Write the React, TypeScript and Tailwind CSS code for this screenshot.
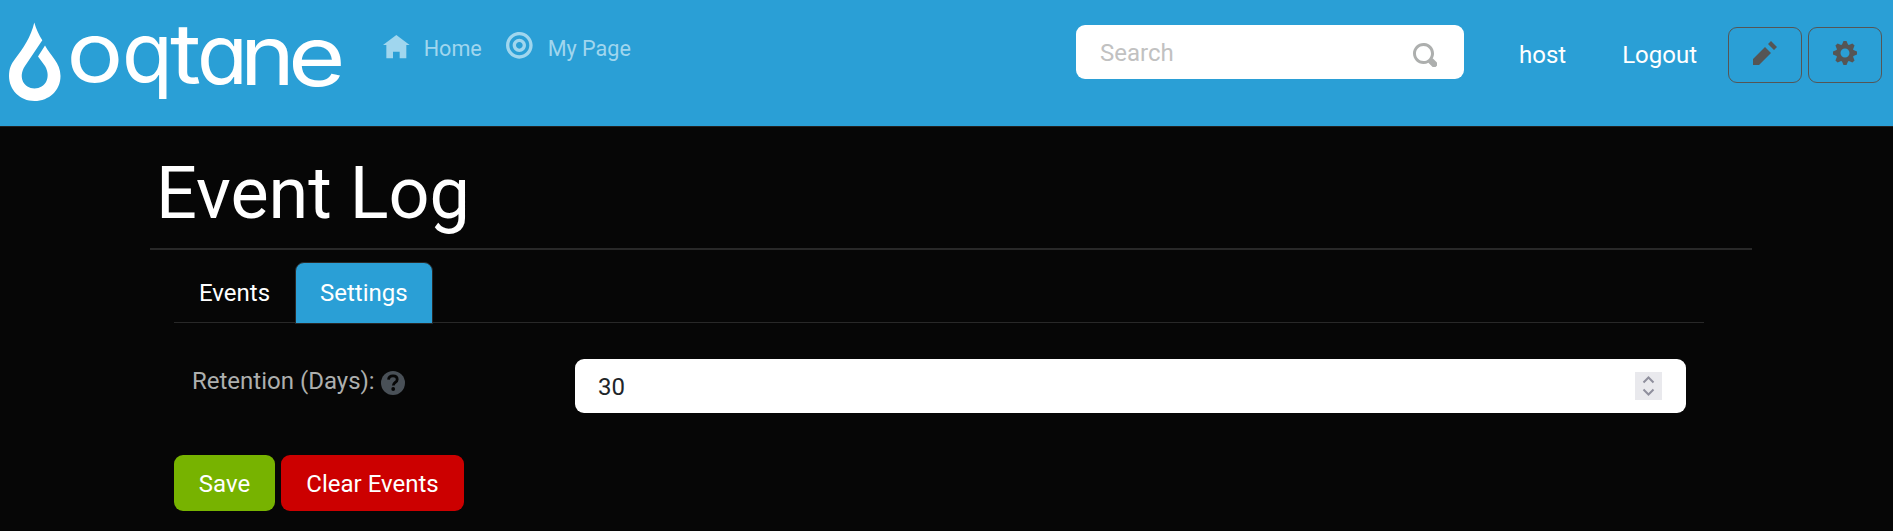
import React from "react";

const icons = {
  home: "M4 0l-4 3h1v4h2v-2h2v2h2v-4.03l1 .03-4-3z",
  target:
    "M4 0c-2.2 0-4 1.8-4 4s1.8 4 4 4 4-1.8 4-4-1.8-4-4-4zm0 1c1.66 0 3 1.34 3 3s-1.34 3-3 3-3-1.34-3-3 1.34-3 3-3zm0 1c-1.1 0-2 .9-2 2s.9 2 2 2 2-.9 2-2-.9-2-2-2zm0 1c.56 0 1 .44 1 1s-.44 1-1 1-1-.44-1-1 .44-1 1-1z",
  search:
    "M3.5 0c-1.93 0-3.5 1.57-3.5 3.5s1.57 3.5 3.5 3.5c.59 0 1.17-.14 1.66-.41a1 1 0 0 0 .13.13l1 1a1.02 1.02 0 1 0 1.44-1.44l-1-1a1 1 0 0 0-.16-.13c.27-.49.44-1.06.44-1.66 0-1.93-1.55-3.5-3.5-3.5zm0 1c1.39 0 2.5 1.11 2.5 2.5 0 .66-.24 1.27-.66 1.72-.01.01-.02.02-.03.03a1 1 0 0 0-.13.13c-.44.4-1.04.63-1.69.63-1.39 0-2.5-1.11-2.5-2.5s1.11-2.5 2.5-2.5z",
  pencil: "M6 0l-1 1 2 2 1-1-2-2zm-2 2l-4 4v2h2l4-4-2-2z",
  cog: "M3.5 0l-.5 1.19c-.1.03-.19.08-.28.13l-1.19-.5-.72.72.5 1.19c-.05.1-.09.18-.13.28l-1.19.5v1l1.19.5c.04.1.08.18.13.28l-.5 1.19.72.72 1.19-.5c.09.04.18.09.28.13l.5 1.19h1l.5-1.19c.09-.04.19-.08.28-.13l1.19.5.72-.72-.5-1.19c.04-.09.09-.19.13-.28l1.19-.5v-1l-1.19-.5c-.03-.09-.08-.19-.13-.28l.5-1.19-.72-.72-1.19.5c-.09-.04-.19-.09-.28-.13l-.5-1.19h-1zm.5 2.5c.83 0 1.5.67 1.5 1.5s-.67 1.5-1.5 1.5-1.5-.67-1.5-1.5.67-1.5 1.5-1.5z",
};

function Icon({ name, className }: { name: keyof typeof icons; className: string }) {
  return (
    <svg viewBox="0 0 8 8" fill="currentColor" className={`shrink-0 ${className}`} aria-hidden="true">
      <path d={icons[name]} />
    </svg>
  );
}

const wordmark = [
  { char: "o", x: 66.5, y: 81.5, stretch: 1.14 },
  { char: "q", x: 122, y: 81.5, stretch: 1 },
  { char: "t", x: 170, y: 83, stretch: 1.15 },
  { char: "a", x: 197, y: 83.5, stretch: 1 },
  { char: "n", x: 240, y: 84.5, stretch: 1.12 },
  { char: "e", x: 288, y: 85.5, stretch: 1.19 },
];

function Logo() {
  return (
    <svg viewBox="0 0 350 126" className="h-[126px] w-[350px] shrink-0" fill="#fff">
      <path d="M34.3 22.5C36 29 39 35 42.3 40.3L25 66C17.5 77 24 88.5 34.5 88.5C45.500 88.500 51.500 77 45 66L38 56.500L45 45.500C50.500 56 60.500 62.500 60.500 76C60.500 90.500 49 101 34.500 101C20 101 9 90 9 76C9 69 11 64 15 59C23 48.500 31 37 34.300 22.500Z" />
      <g className="font-['Inter',sans-serif] text-[83px] [font-feature-settings:'cv11']">
        {wordmark.map(({ char, x, y, stretch }) => (
          <text key={char} transform={`translate(${x} ${y}) scale(${stretch} 1)`}>
            {char}
          </text>
        ))}
      </g>
    </svg>
  );
}

export default function App() {
  return (
    <div className="h-[531px] overflow-hidden bg-[#060606] font-['Roboto',sans-serif] text-2xl leading-9 text-white">
      <header className="flex h-[127px] items-start border-b border-[#202020] bg-[#2a9fd6]">
        <Logo />
        <nav className="flex pt-[30px] pl-[33px] text-[21.6px] text-[#a0d6ee]">
          <a className="flex w-[123px]">
            <Icon name="home" className="mt-[5px] size-[26.67px]" />
            <span className="mt-px ml-[14px]">Home</span>
          </a>
          <a className="flex">
            <Icon name="target" className="mt-[2px] size-[26.67px]" />
            <span className="mt-px ml-[15px]">My Page</span>
          </a>
        </nav>
        <div className="mt-[25px] mr-[11px] ml-auto flex">
          <div className="flex h-[54px] w-[388px] items-center justify-between rounded-[9px] bg-white pr-[27px] pl-6 text-[#c1c1c1]">
            <span className="pt-0.5">Search</span>
            <Icon name="search" className="mt-1.5 size-6 text-[#adafae]" />
          </div>
          <a className="mt-3 ml-[55px]">host</a>
          <a className="mt-3 ml-[56px]">Logout</a>
          <button className="mt-[2px] ml-[31px] flex h-14 w-[74px] justify-center rounded-[9px] border border-[#555] pt-[13px] text-[#555]">
            <Icon name="pencil" className="size-6" />
          </button>
          <button className="mt-[2px] ml-1.5 flex h-14 w-[74px] justify-center rounded-[9px] border border-[#555] pt-[13px] text-[#555]">
            <Icon name="cog" className="size-6" />
          </button>
        </div>
      </header>

      <main className="mr-[141px] ml-[150px]">
        <h1 className="h-[123px] border-b-2 border-[#282828] pt-6 pl-[6px] text-[72px] leading-[86px]">Event Log</h1>
        <div className="mr-12 ml-6 pt-3">
          <div className="flex h-[61px] border-b border-[#282828]">
            <a className="w-[121px] pt-[13px] pl-[25px]">Events</a>
            <a className="h-[62px] w-[138px] rounded-t-[9px] border border-[#282828] bg-[#2a9fd6] pt-3 pl-6">Settings</a>
          </div>
          <div className="flex pt-9 pl-[18px]">
            <label className="flex w-[383px] pt-1 text-[#adafae]">
              Retention (Days):
              <svg viewBox="0 0 24 24" className="mt-2 ml-1.5 size-6" aria-hidden="true">
                <circle cx="12" cy="12" r="12" fill="#495057" />
                <path d="M7.500 8.600C7.800 5.900 9.500 4.900 12 4.900C14.400 4.900 16.200 6.100 16.200 8.400C16.200 11.500 12.300 11.400 12.300 14.600" fill="none" stroke="#060606" strokeWidth="2.800" />
                <circle cx="12.200" cy="18" r="1.900" fill="#060606" />
              </svg>
            </label>
            <div className="flex h-[54px] w-[1111px] items-center justify-between rounded-[9px] bg-white pr-6 pl-[23px] text-[#212529]">
              <span className="pt-0.5">30</span>
              <svg viewBox="0 0 27 28" className="h-7 w-[27px]" fill="none" stroke="#8f8f9d" strokeWidth="2">
                <path d="M0 0H27V28H0Z" fill="#e9e9ed" stroke="none" />
                <path d="M8.500 10.500L13.500 5.500L18.500 10.500M8.500 17.500L13.500 22.500L18.500 17.500" />
              </svg>
            </div>
          </div>
          <div className="flex gap-1.5 pt-[42px]">
            <button className="h-14 w-[101px] rounded-[9px] bg-[#77b300] pt-0.5">Save</button>
            <button className="h-14 w-[183px] rounded-[9px] bg-[#c00] pt-0.5">Clear Events</button>
          </div>
        </div>
      </main>
    </div>
  );
}
